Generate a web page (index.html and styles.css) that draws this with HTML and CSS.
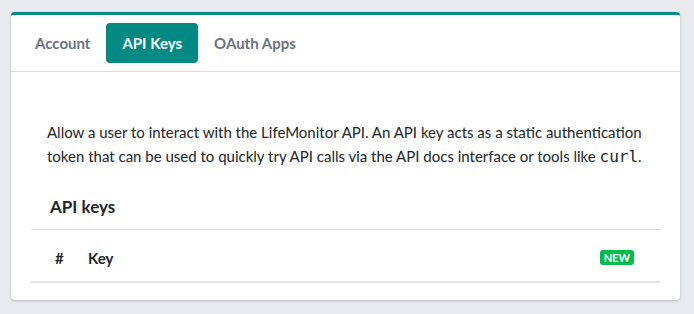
FILE: index.html
```html
<!DOCTYPE html>
<html lang="en">
  <head>
    <meta charset="UTF-8" />
    <meta name="viewport" content="width=device-width, initial-scale=1.0" />
    <link rel="stylesheet" href="styles.css">
  </head>
  <body>
    <div class="card">
      <div class="card-header">
        <ul class="nav-pills">
          <li><a href="#" class="nav-link">Account</a></li>
          <li><a href="#" class="nav-link active">API Keys</a></li>
          <li><a href="#" class="nav-link">OAuth Apps</a></li>
        </ul>
      </div>
      <div class="card-body">
        <p class="intro">
          Allow a user to interact with the LifeMonitor API. An API key acts as a static authentication
          token that can be used to quickly try API calls via the API docs interface or tools like <code>curl</code>.
        </p>
        <h5 class="section-title">API keys</h5>
        <table class="keys-table">
          <thead>
            <tr>
              <th class="col-num">#</th>
              <th class="col-key">Key</th>
              <th class="col-actions"><span class="badge-new">NEW</span></th>
            </tr>
          </thead>
        </table>
      </div>
    </div>
  </body>
</html>
```

FILE: styles.css
```css
body {
  margin: 0;
  padding: 12px 14px 14px 11px;
  background-color: #e9ebee;
  font-family: "Lato", "Open Sans", sans-serif;
  font-size: 15px;
  line-height: 24px;
  color: #212529;
}
.card {
  background-color: #fff;
  border-top: 3px solid #008a83;
  border-radius: 4px;
  box-shadow: 0 0 1px rgba(0, 0, 0, 0.125), 0 1px 3px rgba(0, 0, 0, 0.2);
}
.card-header {
  padding: 8px 8px;
  border-bottom: 1px solid #dcdee2;
}
.nav-pills {
  display: flex;
  list-style: none;
  margin: 0;
  padding: 0;
}
.nav-link {
  display: block;
  padding: 8px 16px;
  border-radius: 4px;
  color: #6c737d;
  font-weight: bold;
  text-decoration: none;
}
.nav-link.active {
  background-color: #008a83;
  color: #fff;
}
.card-body {
  padding: 48px 20px 17px;
}
.intro {
  margin: 0 16px 26px;
}
code {
  font-family: "DejaVu Sans Mono", monospace;
  font-size: 16px;
}
.section-title {
  margin: 0 0 10px 19px;
  font-size: 17px;
  font-weight: bold;
  line-height: 24px;
}
.keys-table {
  width: 100%;
  border-collapse: collapse;
}
.keys-table th {
  padding: 16px 0 11px;
  text-align: left;
  font-size: 15px;
  border-top: 1px solid #dee2e6;
  border-bottom: 2px solid #dee2e6;
}
.col-num {
  width: 33px;
  padding-left: 24px !important;
}
.col-actions {
  text-align: right !important;
  padding-right: 26px !important;
}
.badge-new {
  display: inline-block;
  padding: 0 4px;
  border-radius: 3px;
  background-color: #00bc4b;
  color: #fff;
  font-size: 11px;
  line-height: 15px;
  font-weight: bold;
  vertical-align: 2px;
}
```
